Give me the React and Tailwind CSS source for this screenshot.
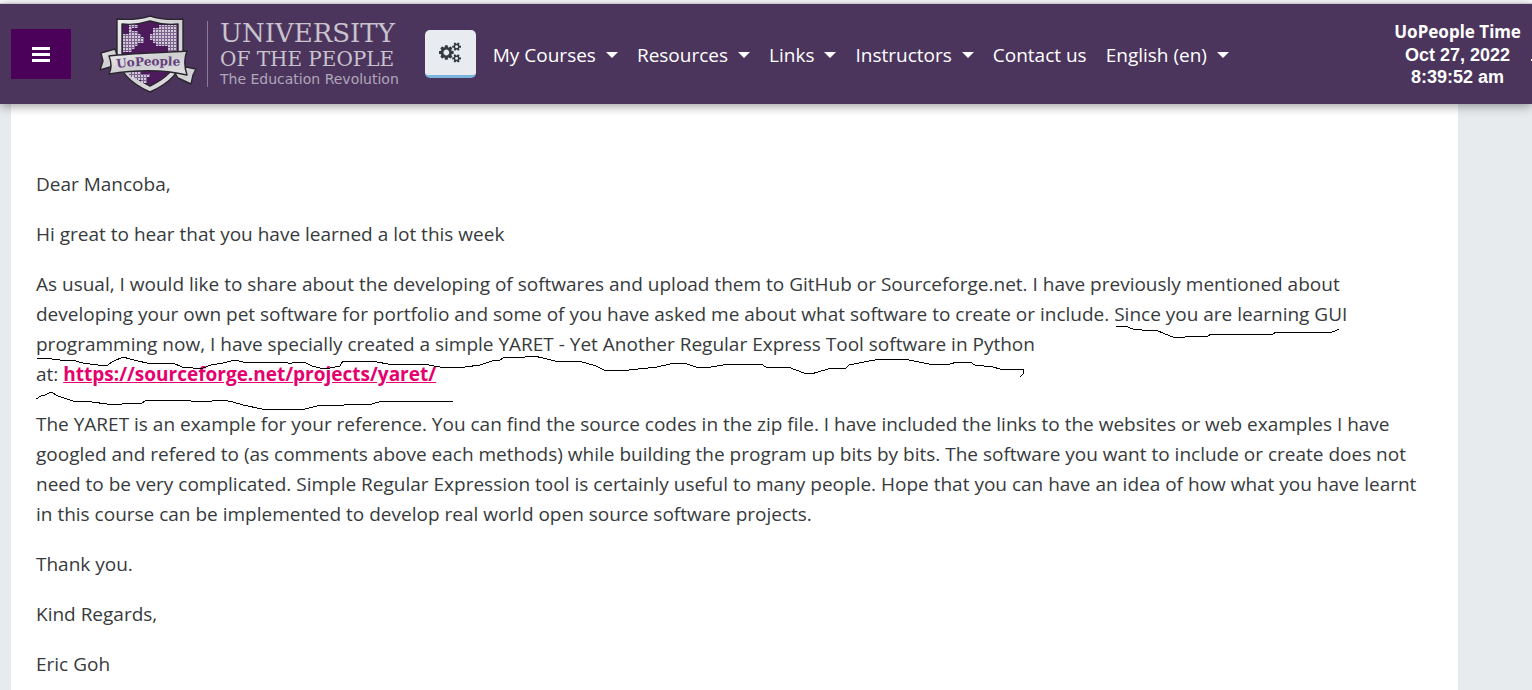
const menus = [
  { label: "My Courses", menu: true },
  { label: "Resources", menu: true },
  { label: "Links", menu: true },
  { label: "Instructors", menu: true },
  { label: "Contact us", menu: false },
  { label: "English (en)", menu: true },
];

function BarsIcon() {
  return (
    <svg width="18" height="15" viewBox="0 0 18 15" fill="currentColor" aria-hidden="true">
      <path d="M0 0H18V3H0ZM0 6H18V9H0ZM0 12H18V15H0Z" />
    </svg>
  );
}

function CogsIcon() {
  return (
    <svg width="22" height="21" viewBox="0 0 1920 1792" fill="currentColor" aria-hidden="true">
      <path d="M896 896q0-106-75-181t-181-75-181 75-75 181 75 181 181 75 181-75 75-181zm768 512q0-52-38-90t-90-38-90 38-38 90q0 53 37.5 90.5t90.5 37.5 90.5-37.5 37.5-90.5zm0-1024q0-52-38-90t-90-38-90 38-38 90q0 53 37.5 90.5t90.5 37.5 90.5-37.5 37.5-90.5zm-384 421v185q0 10-7 19.5t-16 10.5l-155 24q-11 35-32 76 34 48 90 115 7 11 7 20 0 12-7 19-23 30-82.5 89.5t-78.5 59.5q-11 0-21-7l-115-90q-37 19-77 31-11 108-23 155-7 24-30 24h-186q-11 0-20-7.5t-10-17.5l-23-153q-34-10-75-31l-118 89q-7 7-20 7-11 0-21-8-144-133-144-160 0-9 7-19 10-14 41-53t47-61q-23-44-35-82l-152-24q-10-1-17-9.5t-7-19.5v-185q0-10 7-19.5t16-10.5l155-24q11-35 32-76-34-48-90-115-7-11-7-20 0-12 7-20 22-30 82-89t79-59q11 0 21 7l115 90q34-18 77-32 11-108 23-154 7-24 30-24h186q11 0 20 7.5t10 17.5l23 153q34 10 75 31l118-89q8-7 20-7 11 0 21 8 144 133 144 160 0 8-7 19-12 16-42 54t-45 60q23 48 34 82l152 23q10 2 17 10.5t7 19.5zm640 533v140q0 16-149 31-12 27-30 52 51 113 51 138 0 4-4 7-122 71-124 71-8 0-46-47t-52-68q-20 2-30 2t-30-2q-14 21-52 68t-46 47q-2 0-124-71-4-3-4-7 0-25 51-138-18-25-30-52-149-15-149-31v-140q0-16 149-31 13-29 30-52-51-113-51-138 0-4 4-7 4-2 35-20t59-34 30-16q8 0 46 46.5t52 67.5q20-2 30-2t30 2q51-71 92-112l6-2q4 0 124 70 4 3 4 7 0 25-51 138 17 23 30 52 149 15 149 31zm0-1024v140q0 16-149 31-12 27-30 52 51 113 51 138 0 4-4 7-122 71-124 71-8 0-46-47t-52-68q-20 2-30 2t-30-2q-14 21-52 68t-46 47q-2 0-124-71-4-3-4-7 0-25 51-138-18-25-30-52-149-15-149-31v-140q0-16 149-31 13-29 30-52-51-113-51-138 0-4 4-7 4-2 35-20t59-34 30-16q8 0 46 46.5t52 67.5q20-2 30-2t30 2q51-71 92-112l6-2q4 0 124 70 4 3 4 7 0 25-51 138 17 23 30 52 149 15 149 31z" />
    </svg>
  );
}

function Shield() {
  return (
    <svg className="h-20 w-25 shrink-0" viewBox="99 14 100 80" role="img" aria-label="UoPeople shield">
      <defs>
        <pattern id="dots" width="3" height="3" patternUnits="userSpaceOnUse">
          <rect width="3" height="3" fill="#7d638e" />
          <rect width="2" height="2" fill="#cfc8d6" />
        </pattern>
        <linearGradient id="silver" x1="0" y1="0" x2="1" y2="1">
          <stop offset="0" stopColor="#ededee" />
          <stop offset="0.5" stopColor="#cfcfd1" />
          <stop offset="1" stopColor="#e2e2e4" />
        </linearGradient>
      </defs>
      <g stroke="#2b2530" strokeWidth="1.4" strokeLinejoin="round">
        <path d="M150 16 C141 19 130 20 117 19 V56 C119 72 132 84 150 92 C168 84 181 72 183 56 V19 C170 20 159 19 150 16Z" fill="url(#silver)" />
        <path d="M150 21 C141 24 132 25 122 24 V56 C124 69 135 79 150 86 C165 79 176 69 178 56 V24 C168 25 159 24 150 21Z" fill="#4d1a5b" />
      </g>
      <path d="M129 25H138V28H132V31H138V34H141V37H144V43H138V46H135V49H132V52H123V34H129Z" fill="url(#dots)" />
      <path d="M159 25H177V52H168V46H156V43H153V40H150V34H153V28H159Z" fill="url(#dots)" />
      <path d="M129 71H141V74H150V77H147V83H141V80H135V77H129Z" fill="url(#dots)" />
      <g fill="url(#silver)" stroke="#2b2530" strokeWidth="1.4" strokeLinejoin="round">
        <path d="M101 53 L115 49 L118 58 L110 67 L100 70 L103 61Z" />
        <path d="M186 67 L196 69 L193 75 L191 84 L178 78 L175 73Z" />
        <path d="M109 56 C135 53 162 53 187 51 C184 58 184 66 187 75 C162 69 134 70 109 74 C112 68 111 61 109 56Z" />
      </g>
      <path id="ribbon" d="M117 68 Q148 64 184 66" fill="none" />
      <text className="font-['DejaVu_Serif'] font-bold" fontSize="12" fill="#65407c">
        <textPath href="#ribbon">UoPeople</textPath>
      </text>
    </svg>
  );
}

function Caret() {
  return <span className="size-0 border-x-6 border-t-6 border-x-transparent border-t-white" />;
}

function Header() {
  return (
    <header className="relative z-10 mt-[3px] flex items-center border-t border-[#c9c5cd] bg-[#4c355d] py-2.5 pl-[11px] text-white shadow-[0_2px_10px_rgba(0,0,0,0.4)]">
      <button type="button" aria-label="Side panel" className="flex h-[50px] w-15 items-center justify-center bg-[#4b0059]">
        <BarsIcon />
      </button>
      <a href="#home" className="ml-7 flex items-center text-[#c9c3cd]">
        <Shield />
        <span className="ml-2 flex h-[66px] flex-col border-l border-[#8a7b96] pl-3 whitespace-nowrap">
          <span className="font-['DejaVu_Serif'] text-[26px] leading-6">UNIVERSITY</span>
          <span className="font-['DejaVu_Serif'] text-[20px] leading-7">OF THE PEOPLE</span>
          <span className="font-['DejaVu_Sans'] text-[14px] leading-3 text-[#b0a6b9]">The Education Revolution</span>
        </span>
      </a>
      <button type="button" aria-label="Settings" className="ml-[26px] flex h-12 w-[51px] items-center justify-center rounded-[5px] border-b-3 border-[#7ab3dc] bg-[#e8ebef] text-[#343a40]">
        <CogsIcon />
      </button>
      <nav className="ml-[17px] flex items-center gap-[19px] pt-0.5 font-['Open_Sans',sans-serif] text-[19px] whitespace-nowrap">
        {menus.map((m) =>
          m.menu ? (
            <button key={m.label} type="button" className="flex items-center gap-2.5">
              {m.label}
              <Caret />
            </button>
          ) : (
            <a key={m.label} href="#contact">{m.label}</a>
          )
        )}
      </nav>
      <div className="ml-auto text-center font-['Liberation_Sans',sans-serif] text-[18px] leading-[22px] font-bold whitespace-nowrap">
        <div className="font-['Noto_Sans',sans-serif] text-[17px] leading-6">UoPeople Time</div>
        <div>Oct 27, 2022</div>
        <div>8:39:52 am</div>
      </div>
      <span className="mt-3 ml-2.5 h-0.5 w-px bg-white" />
    </header>
  );
}

function PenMarks() {
  return (
    <svg className="pointer-events-none absolute top-0 left-0 h-[586px] w-[1447px]" viewBox="11 104 1447 586" fill="none" stroke="#000" strokeWidth="1" shapeRendering="crispEdges" aria-hidden="true">
      <polyline points="1116,326 1125,326 1133,329 1142,330 1156,330 1165,334 1173,337 1185,337 1189,336 1208,336 1211,334 1273,334 1276,332 1332,332 1335,331 1339,329" />
      <polyline points="37,358 52,359 60,360 72,360 83,363 105,366 108,365 112,362 123,357 130,359 138,361 147,363 173,363 182,367 193,368 203,368 211,365 223,363 235,360 243,362 285,362 291,364 293,362 304,362 312,366 320,368 330,368 340,366 343,361 372,361 393,365 423,364 440,367 465,367 480,365 492,361 500,360 505,357 525,357 534,356 543,358 559,362 579,361 596,366 604,370 629,370 657,367 670,364 684,363 696,367 711,367 729,364 761,364 766,367 788,367 804,373 811,374 818,372 828,369 846,368 849,365 864,362 880,359 904,359 929,364 950,364 957,362 970,362 975,365 993,367 1000,369 1024,370 1023,374 1020,377" />
      <polyline points="36,399 41,396 45,395 51,392 58,396 73,401 92,402 107,404 122,404 142,403 145,401 162,400 180,400 202,402 223,400 233,402 243,405 262,409 305,409 317,406 372,404 382,401 440,401 453,401" />
    </svg>
  );
}

export default function App() {
  return (
    <div className="flow-root h-screen overflow-hidden bg-white">
      <Header />
      <div className="min-h-screen bg-[#e8ebee] pr-[74px] pl-[11px]">
        <main className="relative min-h-screen bg-white px-[25px] pt-[65px] font-['Open_Sans',sans-serif] text-[19px] leading-[30px] whitespace-nowrap text-[#373a3c] *:mb-5">
          <p>Dear Mancoba,</p>
          <p>Hi great to hear that you have learned a lot this week</p>
          <p>
            As usual, I would like to share about the developing of softwares and upload them to GitHub or Sourceforge.net. I have previously mentioned about
            <br />
            developing your own pet software for portfolio and some of you have asked me about what software to create or include. Since you are learning GUI
            <br />
            programming now, I have specially created a simple YARET - Yet Another Regular Express Tool software in Python
            <br />
            at:{" "}
            <a href="https://sourceforge.net/projects/yaret/" className="font-bold text-[#e5006d] underline">
              https://sourceforge.net/projects/yaret/
            </a>
          </p>
          <p>
            The YARET is an example for your reference. You can find the source codes in the zip file. I have included the links to the websites or web examples I have
            <br />
            googled and refered to (as comments above each methods) while building the program up bits by bits. The software you want to include or create does not
            <br />
            need to be very complicated. Simple Regular Expression tool is certainly useful to many people. Hope that you can have an idea of how what you have learnt
            <br />
            in this course can be implemented to develop real world open source software projects.
          </p>
          <p>Thank you.</p>
          <p>Kind Regards,</p>
          <p>Eric Goh</p>
          <PenMarks />
        </main>
      </div>
    </div>
  );
}
